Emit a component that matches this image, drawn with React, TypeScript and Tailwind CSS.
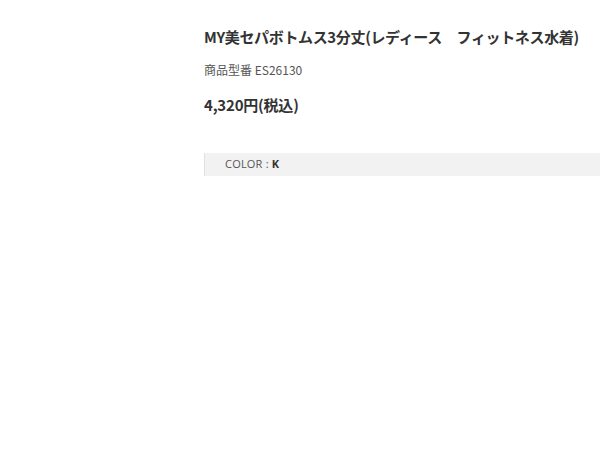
export default function App() {
  return (
    <div className="w-[600px] h-[450px] bg-white overflow-hidden flex">
      <div className="w-[204px] shrink-0" />
      <div className="flex-1 flex flex-col">
        <h1
          className="mt-[27px] text-[15px] leading-[20px] font-bold text-[#333] tracking-[-0.35px] whitespace-nowrap"
          style={{ fontFamily: '"Noto Sans CJK JP", sans-serif' }}
        >
          MY美セパボトムス3分丈(レディース　フィットネス水着)
        </h1>
        <p
          className="mt-[15px] text-[12px] leading-[16px] text-[#555]"
          style={{ fontFamily: '"Noto Sans CJK JP", sans-serif' }}
        >
          商品型番 ES26130
        </p>
        <p
          className="mt-[17px] text-[15px] leading-[20px] font-bold text-[#333] tracking-[-0.2px]"
          style={{ fontFamily: '"Noto Sans CJK JP", sans-serif' }}
        >
          4,320円(税込)
        </p>
        <div className="mt-[38px] h-[23px] bg-[#f2f2f2] border-l border-[#e0e0e0] flex items-center pl-[20px]">
          <span
            className="text-[11px] text-[#555] tracking-[0.2px]"
            style={{ fontFamily: '"Open Sans", sans-serif' }}
          >
            COLOR : <b className="font-bold text-[#333]">K</b>
          </span>
        </div>
      </div>
    </div>
  );
}
